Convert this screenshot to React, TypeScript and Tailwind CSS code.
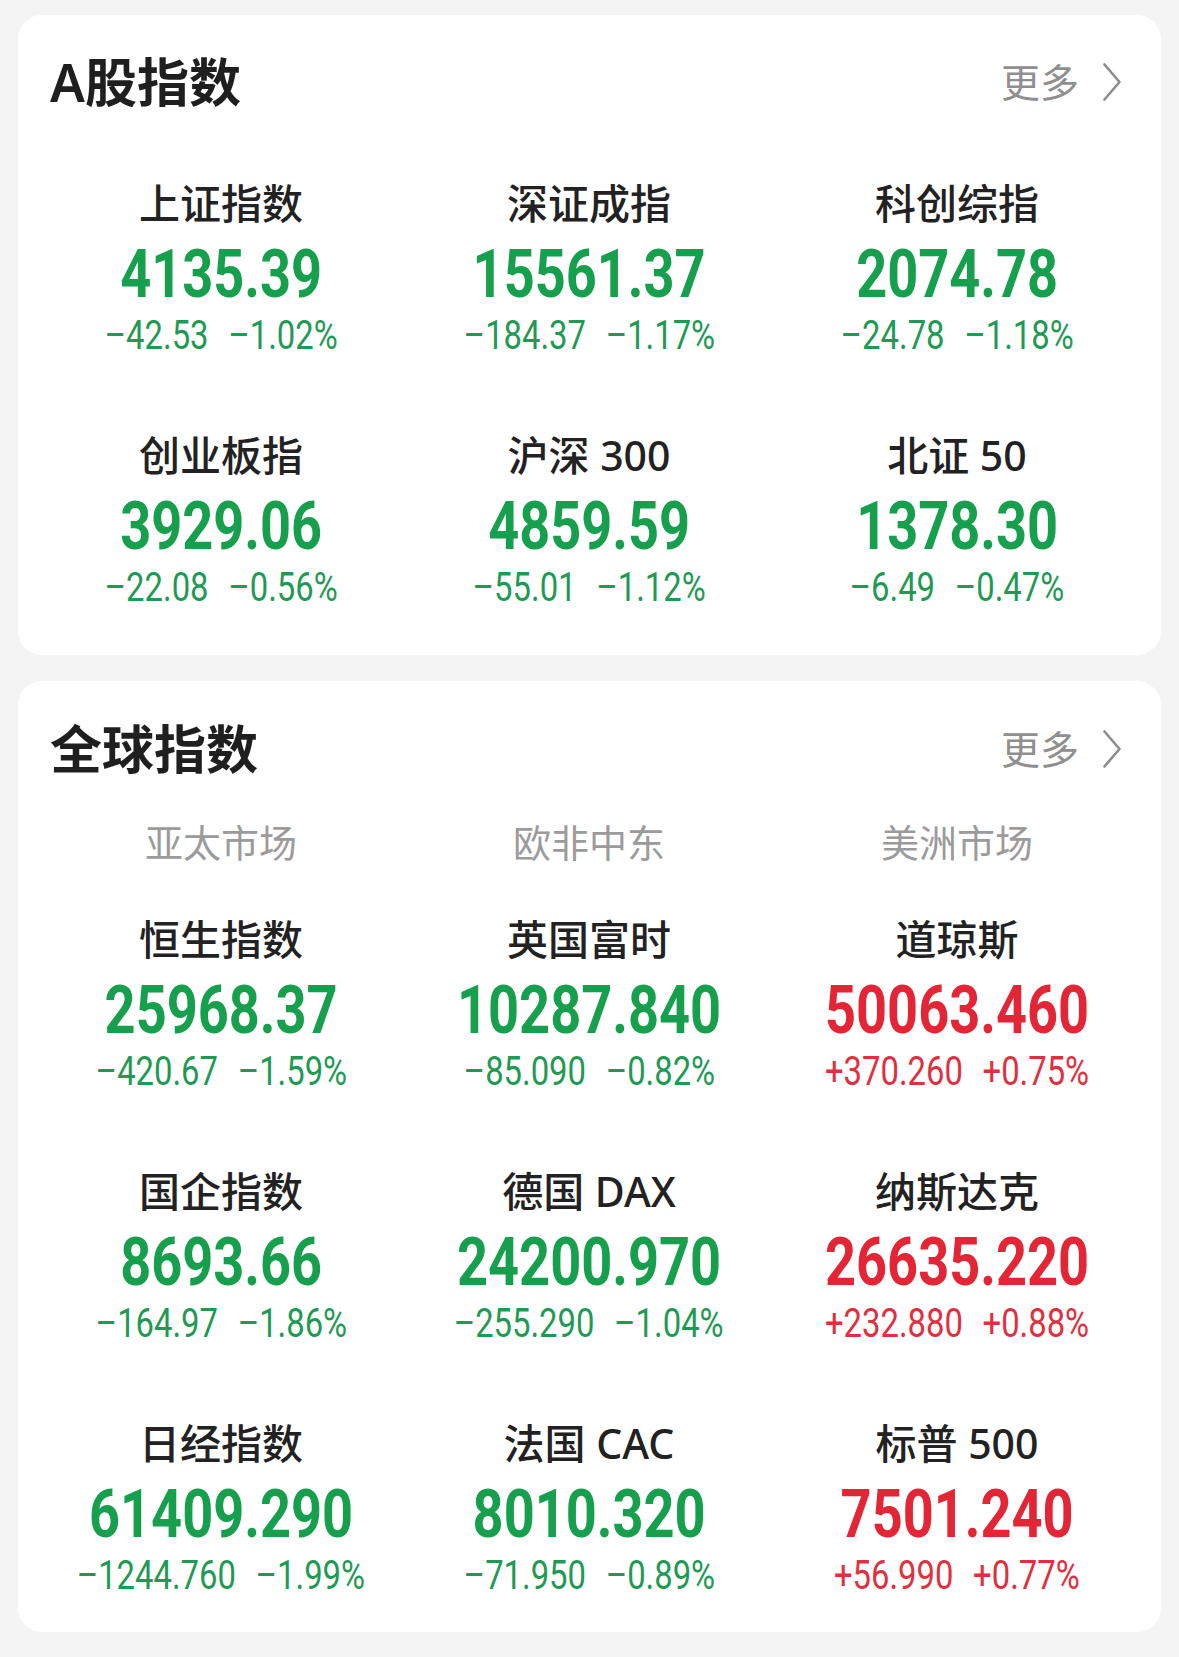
import React from 'react';

type Quote = { name: string; value: string; change: string; pct: string; up?: boolean };

const aShares: Quote[] = [
  { name: '上证指数', value: '4135.39', change: '–42.53', pct: '–1.02%' },
  { name: '深证成指', value: '15561.37', change: '–184.37', pct: '–1.17%' },
  { name: '科创综指', value: '2074.78', change: '–24.78', pct: '–1.18%' },
  { name: '创业板指', value: '3929.06', change: '–22.08', pct: '–0.56%' },
  { name: '沪深 300', value: '4859.59', change: '–55.01', pct: '–1.12%' },
  { name: '北证 50', value: '1378.30', change: '–6.49', pct: '–0.47%' },
];

const regions = ['亚太市场', '欧非中东', '美洲市场'];

const globalIdx: Quote[] = [
  { name: '恒生指数', value: '25968.37', change: '–420.67', pct: '–1.59%' },
  { name: '英国富时', value: '10287.840', change: '–85.090', pct: '–0.82%' },
  { name: '道琼斯', value: '50063.460', change: '+370.260', pct: '+0.75%', up: true },
  { name: '国企指数', value: '8693.66', change: '–164.97', pct: '–1.86%' },
  { name: '德国 DAX', value: '24200.970', change: '–255.290', pct: '–1.04%' },
  { name: '纳斯达克', value: '26635.220', change: '+232.880', pct: '+0.88%', up: true },
  { name: '日经指数', value: '61409.290', change: '–1244.760', pct: '–1.99%' },
  { name: '法国 CAC', value: '8010.320', change: '–71.950', pct: '–0.89%' },
  { name: '标普 500', value: '7501.240', change: '+56.990', pct: '+0.77%', up: true },
];

const Header = ({ title }: { title: string }) => (
  <div className="flex h-[60px] items-center justify-between pl-[32px] pr-[40px]">
    <h2 className="text-[52px] font-semibold leading-[60px] text-[#1f1f1f]">{title}</h2>
    <div className="flex items-center gap-[24px] text-[#8f8f8f]">
      <span className="text-[39px] leading-[48px]">更多</span>
      <svg width="18" height="38" viewBox="0 0 18 38" fill="none">
        <path d="M1.5 1.5 L16.5 19 L1.5 36.5" stroke="#8c8c8c" strokeWidth="2.6" strokeLinecap="round" strokeLinejoin="round" />
      </svg>
    </div>
  </div>
);

const Cell = ({ q }: { q: Quote }) => {
  const color = q.up ? 'text-[#e42535]' : 'text-[#16a04e]';
  const sub = q.up ? 'text-[#e03040]' : 'text-[#1f9a55]';
  return (
    <div className="flex flex-col items-center">
      <div className="text-[41px] font-medium leading-[50px] text-[#222]">{q.name}</div>
      <div className={`${color} mt-[11px] scale-x-[0.82] font-['Roboto',sans-serif] text-[66px] font-bold leading-[72px]`}>
        {q.value}
      </div>
      <div className={`${sub} mt-px flex scale-x-[0.82] gap-[24px] font-['Roboto',sans-serif] text-[40px] leading-[48px]`}>
        <span>{q.change}</span>
        <span>{q.pct}</span>
      </div>
    </div>
  );
};

export default function App() {
  return (
    <div className="min-h-screen bg-[#f4f4f4] px-[18px] pb-[25px] pt-[15px] font-['Noto_Sans','Noto_Sans_CJK_SC',sans-serif]">
      <section className="rounded-[24px] bg-white pb-[43px] pt-[37px]">
        <Header title="A股指数" />
        <div className="mt-[66px] grid grid-cols-3 gap-y-[70px] pl-[19px] pr-[20px]">
          {aShares.map((q) => (
            <Cell key={q.name} q={q} />
          ))}
        </div>
      </section>

      <section className="mt-[26px] rounded-[24px] bg-white pb-[32px] pt-[38px]">
        <Header title="全球指数" />
        <div className="mt-[39px] grid grid-cols-3 pl-[19px] pr-[20px]">
          {regions.map((r) => (
            <div key={r} className="text-center text-[38px] leading-[48px] text-[#9b9b9b]">
              {r}
            </div>
          ))}
        </div>
        <div className="mt-[48px] grid grid-cols-3 gap-y-[70px] pl-[19px] pr-[20px]">
          {globalIdx.map((q) => (
            <Cell key={q.name} q={q} />
          ))}
        </div>
      </section>
    </div>
  );
}
